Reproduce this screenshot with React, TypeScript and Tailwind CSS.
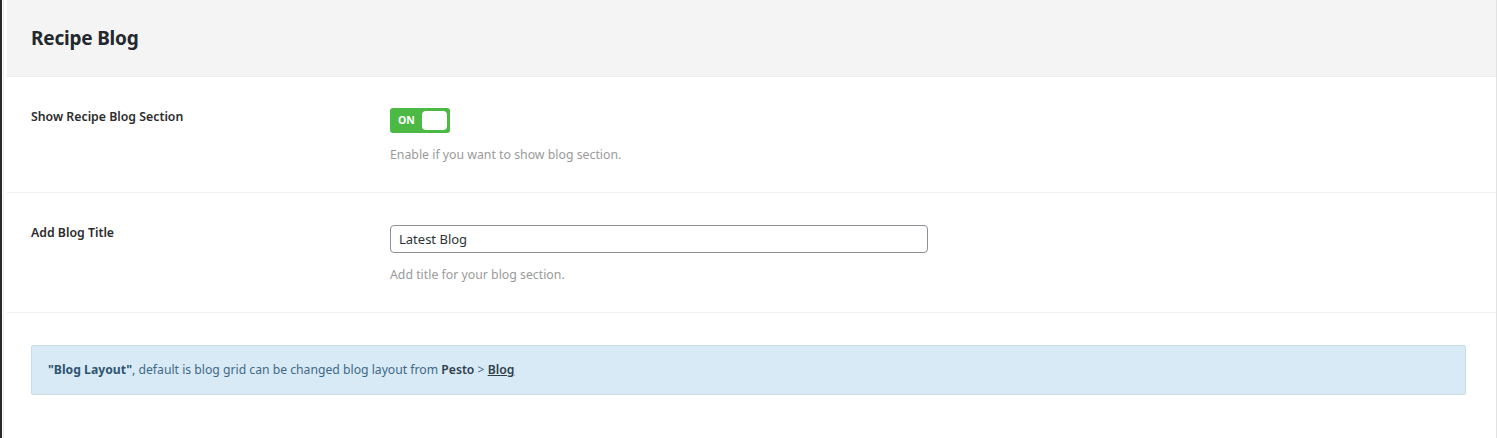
export default function App() {
  return (
    <div
      className="w-[1497px] h-[438px] bg-white border-l-2 border-[#2a2a2a] border-r border-r-[#e2e2e2] flex text-[#23282d]"
      style={{ fontFamily: '"Noto Sans", "Open Sans", sans-serif' }}
    >
      <div className="w-px bg-white" />
      <div className="w-px bg-[#ececec]" />
      <div className="w-[3px] bg-white" />
      <div className="flex-1 flex flex-col">
        <div className="h-[77px] shrink-0 bg-[#f4f4f4] border-b border-[#ececec] flex items-center pl-[24px]">
          <h2 className="text-[19px] font-bold tracking-[-0.2px]">Recipe Blog</h2>
        </div>

        <div className="h-[116px] shrink-0 flex border-b border-[#f2f2f2] pt-[31px]">
          <div className="w-[383px] pl-[24px] text-[12.3px] font-semibold text-[#2c2c2c] leading-[18px]">
            Show Recipe Blog Section
          </div>
          <div className="flex flex-col">
            <button className="w-[60px] h-[25px] bg-[#4cb944] rounded-[3px] flex items-center justify-between pl-[8px] pr-[3px]">
              <span className="text-white text-[10.5px] font-bold">ON</span>
              <span className="w-[25px] h-[19px] bg-white rounded-[4px]" />
            </button>
            <p className="mt-[13px] text-[12.3px] text-[#9a9a9a]">Enable if you want to show blog section.</p>
          </div>
        </div>

        <div className="h-[120px] shrink-0 flex border-b border-[#f2f2f2] pt-[31px]">
          <div className="w-[383px] pl-[24px] text-[12.3px] font-semibold text-[#2c2c2c] leading-[18px]">
            Add Blog Title
          </div>
          <div className="flex flex-col pt-[1px]">
            <input
              readOnly
              value="Latest Blog"
              className="w-[538px] h-[28px] border border-[#8c8f94] rounded-[4px] px-[8px] text-[13px] text-[#2c3338] outline-none"
              style={{ fontFamily: '"Noto Sans", sans-serif' }}
            />
            <p className="mt-[13px] text-[12.3px] text-[#9a9a9a]">Add title for your blog section.</p>
          </div>
        </div>

        <div className="pt-[32px] pl-[24px] pr-[30px]">
          <div className="h-[50px] bg-[#d9eaf7] border border-[#c9dcea] rounded-[2px] flex items-center pl-[16px] text-[12.2px] text-[#3d6986]">
            <span>
              <span className="font-bold text-[#2f556f]">"Blog Layout"</span>, default is blog grid can be changed blog
              layout from <span className="font-semibold text-[#2f3f4b]">Pesto</span> &gt;{" "}
              <span className="font-semibold text-[#2f3f4b] underline">Blog</span>
            </span>
          </div>
        </div>
      </div>
    </div>
  );
}
